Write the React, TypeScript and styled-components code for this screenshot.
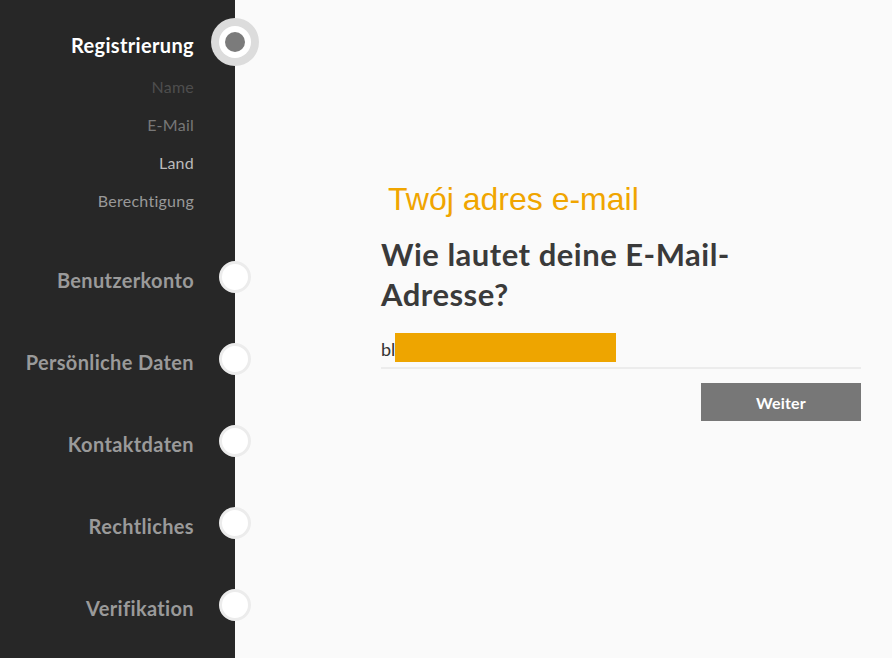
import React from 'react';
import styled, { createGlobalStyle } from 'styled-components';

const GlobalStyle = createGlobalStyle`
  html, body {
    margin: 0;
    padding: 0;
    background: #fafafa;
    font-family: Lato, "Open Sans", sans-serif;
  }
`;

const Page = styled.div`
  display: flex;
  width: 892px;
  height: 658px;
  overflow: hidden;
`;

const Sidebar = styled.nav`
  width: 235px;
  flex-shrink: 0;
  background: #272727;
  padding-top: 26px;
  display: flex;
  flex-direction: column;
`;

const StepRow = styled.div<{ $gapAfter: number }>`
  position: relative;
  height: 32px;
  margin-bottom: ${({ $gapAfter }) => $gapAfter}px;
  display: flex;
  justify-content: flex-end;
  padding-right: 41px;
`;

const StepLabel = styled.span<{ $active: boolean }>`
  font-size: 20px;
  font-weight: 700;
  letter-spacing: 0.35px;
  line-height: 24px;
  padding-top: 7px;
  white-space: nowrap;
  color: ${({ $active }) => ($active ? '#ffffff' : '#9a9a9a')};
`;

const Marker = styled.span<{ $active: boolean }>`
  position: absolute;
  right: -16px;
  top: 0;
  width: 32px;
  height: 32px;
  box-sizing: border-box;
  border-radius: 50%;
  background: #ffffff;
  border: ${({ $active }) => ($active ? 'none' : '3px solid #ececec')};
  box-shadow: ${({ $active }) => ($active ? '0 0 0 8px #dcdcdc' : 'none')};
  z-index: 2;

  &::after {
    content: '';
    display: ${({ $active }) => ($active ? 'block' : 'none')};
    position: absolute;
    left: 6px;
    top: 6px;
    width: 20px;
    height: 20px;
    border-radius: 50%;
    background: #7b7b7b;
  }
`;

const SubList = styled.ul`
  list-style: none;
  margin: 11px 0 41px;
  padding: 0 41px 0 0;
  display: flex;
  flex-direction: column;
  align-items: flex-end;
`;

const SubItem = styled.li<{ $tone: string }>`
  height: 38px;
  line-height: 38px;
  font-size: 16px;
  letter-spacing: 0.25px;
  color: ${({ $tone }) => $tone};
`;

const Main = styled.main`
  flex: 1;
  background: #fafafa;
  padding: 178px 0 0 146px;
`;

const Form = styled.div`
  width: 480px;
  display: flex;
  flex-direction: column;
`;

const Hint = styled.div`
  font-family: "Liberation Sans", Arial, sans-serif;
  font-size: 32px;
  color: #f0a500;
  line-height: 42px;
  padding-left: 7px;
  margin-bottom: 14px;
`;

const Question = styled.h1`
  margin: 0 0 15px;
  max-width: 420px;
  font-size: 31px;
  font-weight: 700;
  letter-spacing: 0.5px;
  line-height: 40px;
  color: #3a3a3a;
`;

const InputWrap = styled.div`
  position: relative;
  border-bottom: 2px solid #ececec;
  height: 38px;
  display: flex;
  align-items: center;
`;

const InputText = styled.span`
  font-size: 18px;
  color: #333333;
  padding-top: 2px;
`;

const Redaction = styled.span`
  position: absolute;
  left: 14px;
  top: 4px;
  width: 221px;
  height: 29px;
  background: #eea500;
`;

const Actions = styled.div`
  display: flex;
  justify-content: flex-end;
  margin-top: 14px;
`;

const NextButton = styled.button`
  width: 160px;
  height: 38px;
  border: none;
  background: #777777;
  color: #ffffff;
  font-family: Lato, sans-serif;
  font-size: 16px;
  font-weight: 700;
  letter-spacing: 0.2px;
  cursor: pointer;
`;

const subSteps = [
  { label: 'Name', tone: '#4e4e4e' },
  { label: 'E-Mail', tone: '#777777' },
  { label: 'Land', tone: '#bbbbbb' },
  { label: 'Berechtigung', tone: '#999999' },
];

const steps = ['Benutzerkonto', 'Persönliche Daten', 'Kontaktdaten', 'Rechtliches', 'Verifikation'];

export default function App() {
  return (
    <Page>
      <GlobalStyle />
      <Sidebar>
        <StepRow $gapAfter={0}>
          <StepLabel $active>Registrierung</StepLabel>
          <Marker $active />
        </StepRow>
        <SubList>
          {subSteps.map((s) => (
            <SubItem key={s.label} $tone={s.tone}>
              {s.label}
            </SubItem>
          ))}
        </SubList>
        {steps.map((s) => (
          <StepRow key={s} $gapAfter={51}>
            <StepLabel $active={false}>{s}</StepLabel>
            <Marker $active={false} />
          </StepRow>
        ))}
      </Sidebar>
      <Main>
        <Form>
          <Hint>Twój adres e-mail</Hint>
          <Question>Wie lautet deine E-Mail-Adresse?</Question>
          <InputWrap>
            <InputText>bl</InputText>
            <Redaction />
          </InputWrap>
          <Actions>
            <NextButton type="button">Weiter</NextButton>
          </Actions>
        </Form>
      </Main>
    </Page>
  );
}
